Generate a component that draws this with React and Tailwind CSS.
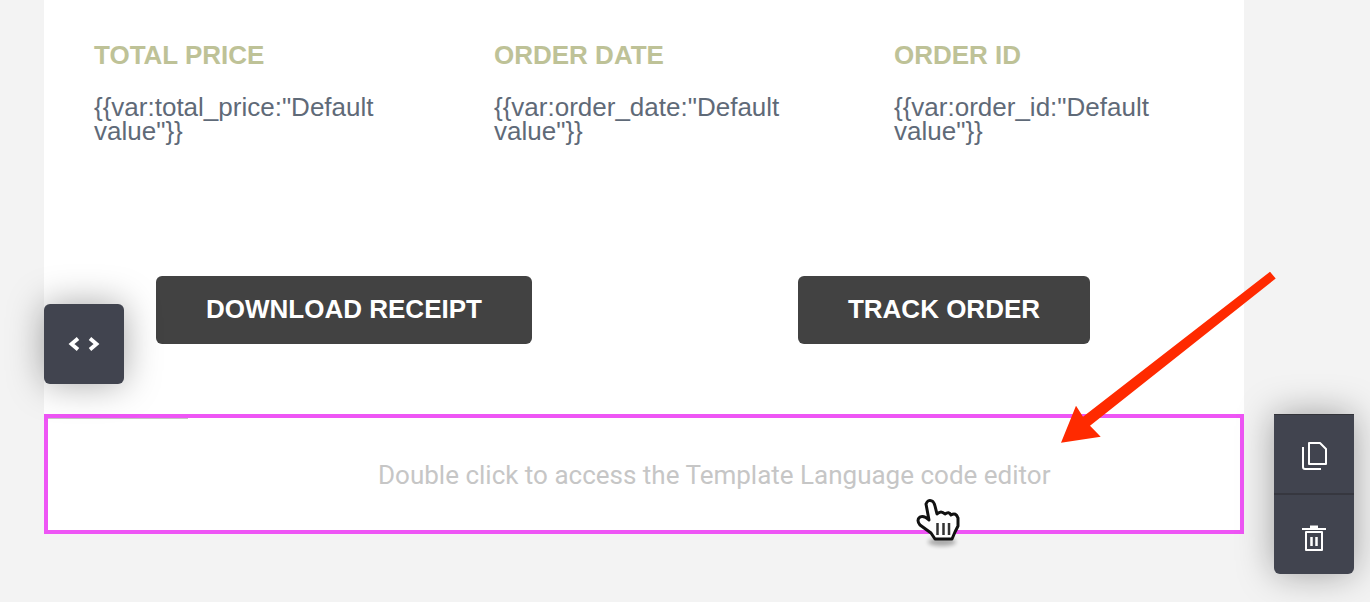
const columns = [
  { title: "TOTAL PRICE", value: '{{var:total_price:"Default value"}}' },
  { title: "ORDER DATE", value: '{{var:order_date:"Default value"}}' },
  { title: "ORDER ID", value: '{{var:order_id:"Default value"}}' },
];

function CodeIcon() {
  return (
    <svg width="40" height="40" viewBox="0 0 40 40" fill="none" stroke="#ffffff" strokeWidth="3.8">
      <path d="M14 14.5 L7.5 20 L14 25.5" />
      <path d="M26 14.5 L32.5 20 L26 25.5" />
    </svg>
  );
}

function CopyIcon() {
  return (
    <svg width="40" height="40" viewBox="0 0 40 40" fill="none" stroke="#ffffff" strokeWidth="2">
      <path d="M15 9 H26 L32 15 V30 H15 Z" strokeLinejoin="round" />
      <path d="M9 13 V33 Q9 35 11 35 H27" />
    </svg>
  );
}

function TrashIcon() {
  return (
    <svg width="40" height="40" viewBox="0 0 40 40" fill="none" stroke="#ffffff" strokeWidth="2">
      <path d="M8 14 H32" />
      <path d="M16 12 H24" strokeWidth="3" />
      <path d="M12 17 H28 V35 H12 Z" strokeLinejoin="round" />
      <path d="M17.5 22 V31 M22.5 22 V31" strokeWidth="2.5" />
    </svg>
  );
}

function Arrow() {
  return (
    <svg className="absolute left-[1050px] top-[260px] pointer-events-none" width="240" height="190" viewBox="1050 260 240 190">
      <path d="M1270 271.7 L1275.7 278.5 L1090 425.7 L1100.7 436.7 L1061 442.7 L1076 405.7 L1083 416.7 Z" fill="#ff2a00" />
    </svg>
  );
}

function HandCursor() {
  return (
    <svg className="absolute left-[910px] top-[495px] pointer-events-none" width="60" height="60" viewBox="0 0 60 60">
      <ellipse cx="32" cy="47" rx="14" ry="4" fill="#000000" opacity="0.3" className="blur-[2px]" />
      <path
        d="M16 9 Q18 4 22 6 Q24 7 25 11 L27 19 Q31 15 35 19 Q39 16 41 20 Q46 17 48 23 L48 31 L45 37 L42 44 H25 L21 38 L10 30 Q6 25 10 22 Q14 20 19 25 Z"
        fill="#ffffff"
        stroke="#111111"
        strokeWidth="3"
        strokeLinejoin="round"
      />
      <path d="M27.5 28 V40 M33.5 28 V40 M39 28 V40" stroke="#333333" strokeWidth="2.5" />
    </svg>
  );
}

export default function App() {
  return (
    <div className="relative h-[602px] w-[1370px] overflow-hidden bg-[#f3f3f3]">
      <div className="ml-[44px] w-[1200px]">
        <div className="h-[414px] bg-white font-['Liberation_Sans',sans-serif]">
          <div className="grid grid-cols-3 pt-[41px]">
            {columns.map((col) => (
              <div key={col.title} className="pl-[50px] pr-[60px]">
                <div className="text-[26px] leading-[28px] font-bold text-[#bec297]">{col.title}</div>
                <div className="mt-[26px] text-[26px] leading-[24px] text-[#5f6a78]">{col.value}</div>
              </div>
            ))}
          </div>
          <div className="mt-[133px] flex pl-[112px]">
            <div className="flex h-[68px] w-[376px] items-center justify-center rounded-md bg-[#424242] pb-[2px] text-[26px] font-bold text-white">
              DOWNLOAD RECEIPT
            </div>
            <div className="ml-[266px] flex h-[68px] w-[292px] items-center justify-center rounded-md bg-[#424242] pb-[2px] text-[26px] font-bold text-white">
              TRACK ORDER
            </div>
          </div>
        </div>
        <div className="relative h-[120px] border-4 border-[#ee55f5] bg-white">
          <div className="h-px w-[140px] bg-[#c4c4c4]" />
          <div className="pt-[42px] pl-[330px] font-['Roboto',sans-serif] text-[26px] leading-[28px] text-[#c6c6c6]">
            Double click to access the Template Language code editor
          </div>
        </div>
      </div>

      {/* floating tools over the block */}
      <div className="absolute left-[44px] top-[304px] flex h-[80px] w-[80px] items-center justify-center rounded-md bg-[#41444f] shadow-[0_0_36px_rgba(0,0,0,0.35)]">
        <CodeIcon />
      </div>
      <div className="absolute left-[1274px] top-[414px] w-[80px] rounded-b-md border-t border-[#33343a] bg-[#41444f] shadow-[0_0_36px_rgba(0,0,0,0.35)]">
        <div className="flex h-[80px] items-center justify-center border-b-2 border-[#36373f]">
          <CopyIcon />
        </div>
        <div className="flex h-[79px] items-center justify-center">
          <TrashIcon />
        </div>
      </div>

      <Arrow />
      <HandCursor />
    </div>
  );
}
